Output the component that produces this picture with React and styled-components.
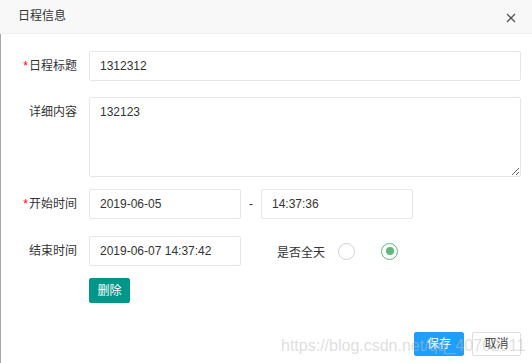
import React from "react";
import styled, { createGlobalStyle } from "styled-components";

const Global = createGlobalStyle`
  html, body { margin: 0; padding: 0; background: #fff; }
  body { font-family: "Liberation Sans", "Noto Sans CJK SC", sans-serif; color: #333; }
  * { box-sizing: border-box; }
`;

const Dialog = styled.div`
  position: relative;
  width: 532px;
  height: 363px;
  display: flex;
  flex-direction: column;
  background: #fff;
  overflow: hidden;
`;

const Header = styled.div`
  height: 34px;
  flex: none;
  display: flex;
  align-items: center;
  justify-content: space-between;
  padding: 0 15px 0 18px;
  background: #f8f8f8;
  border-bottom: 1px solid #eee;
`;

const Title = styled.div`
  font-size: 12px;
  color: #333;
  line-height: 14px;
  margin-top: -1px;
`;

const CloseBtn = styled.button`
  width: 12px;
  height: 12px;
  padding: 0;
  border: 0;
  background: none;
  display: flex;
  align-items: center;
  justify-content: center;
  margin-top: 2px;
  cursor: pointer;
`;

const Body = styled.div`
  flex: 1;
  padding: 17px 11px 0 0;
  border-left: 1px solid #a8a8a8;
  display: flex;
  flex-direction: column;
`;

const Row = styled.div`
  display: flex;
  align-items: ${(p) => (p.$top ? "flex-start" : "center")};
  margin-bottom: ${(p) => p.$mb || 0}px;
`;

const Label = styled.label`
  width: 76px;
  margin-right: 12px;
  text-align: right;
  font-size: 12px;
  line-height: 30px;
  color: #333;
  flex: none;
  white-space: nowrap;
`;

const Req = styled.span`
  color: #f00;
  font-size: 12px;
  margin-right: 1px;
`;

const Input = styled.input`
  width: ${(p) => p.$w || "100%"};
  flex: ${(p) => (p.$w ? "none" : "1")};
  height: 30px;
  border: 1px solid #e6e6e6;
  border-radius: 2px;
  padding: 0 10px;
  font-family: inherit;
  font-size: 12px;
  color: #333;
  background: #fff;
  outline: none;
`;

const TextArea = styled.textarea`
  flex: 1;
  height: 80px;
  border: 1px solid #e6e6e6;
  border-radius: 2px;
  padding: 5px 10px;
  font-family: inherit;
  font-size: 12px;
  line-height: 18px;
  color: #333;
  outline: none;
  resize: vertical;
`;

const Dash = styled.span`
  width: 20px;
  text-align: center;
  font-size: 12px;
  color: #333;
  flex: none;
`;

const SubLabel = styled.span`
  font-size: 12px;
  color: #333;
  margin-left: 36px;
  margin-right: 13px;
`;

const Radio = styled.span`
  width: 17px;
  height: 17px;
  border-radius: 50%;
  border: 1px solid ${(p) => (p.$checked ? "#5FB878" : "#d2d2d2")};
  display: flex;
  align-items: center;
  justify-content: center;
  margin-right: ${(p) => p.$mr || 0}px;
  flex: none;
  &::after {
    content: "";
    display: ${(p) => (p.$checked ? "block" : "none")};
    width: 8px;
    height: 8px;
    border-radius: 50%;
    background: #5FB878;
  }
`;

const Btn = styled.button`
  height: ${(p) => p.$h || 24}px;
  width: ${(p) => p.$w}px;
  padding: 0;
  border: 1px solid ${(p) => p.$border || p.$bg};
  background: ${(p) => p.$bg};
  color: ${(p) => p.$color};
  border-radius: 2px;
  font-family: inherit;
  font-size: 12px;
  line-height: 1;
  cursor: pointer;
`;

const DeleteRow = styled.div`
  padding-left: 88px;
  margin-top: 12px;
`;

const Footer = styled.div`
  display: flex;
  justify-content: flex-end;
  gap: 8px;
  margin-top: 29px;
`;

const Watermark = styled.div`
  position: absolute;
  left: 281px;
  top: 337px;
  font-family: "Liberation Sans", sans-serif;
  font-size: 16px;
  line-height: 18px;
  color: rgba(190, 190, 190, 0.5);
  pointer-events: none;
  white-space: nowrap;
`;

export default function App() {
  return (
    <>
      <Global />
      <Dialog>
        <Header>
          <Title>日程信息</Title>
          <CloseBtn aria-label="close">
            <svg width="10" height="10" viewBox="0 0 10 10">
              <path d="M1 1 L9 9 M9 1 L1 9" stroke="#555" strokeWidth="1.3" />
            </svg>
          </CloseBtn>
        </Header>
        <Body>
          <Row $mb={16}>
            <Label><Req>*</Req>日程标题</Label>
            <Input defaultValue="1312312" />
          </Row>
          <Row $top $mb={12}>
            <Label>详细内容</Label>
            <TextArea defaultValue="132123" />
          </Row>
          <Row $mb={17}>
            <Label><Req>*</Req>开始时间</Label>
            <Input $w="152px" defaultValue="2019-06-05" />
            <Dash>-</Dash>
            <Input $w="152px" defaultValue="14:37:36" />
          </Row>
          <Row>
            <Label>结束时间</Label>
            <Input $w="152px" defaultValue="2019-06-07 14:37:42" />
            <SubLabel>是否全天</SubLabel>
            <Radio $mr={26} />
            <Radio $checked />
          </Row>
          <DeleteRow>
            <Btn $bg="#009688" $color="#fff" $w={41} $h={25}>删除</Btn>
          </DeleteRow>
          <Footer>
            <Btn $bg="#1E9FFF" $color="#fff" $w={50}>保存</Btn>
            <Btn $bg="#fff" $border="#dedede" $color="#333" $w={49}>取消</Btn>
          </Footer>
        </Body>
        <Watermark>https://blog.csdn.net/qq_40762011</Watermark>
      </Dialog>
    </>
  );
}
